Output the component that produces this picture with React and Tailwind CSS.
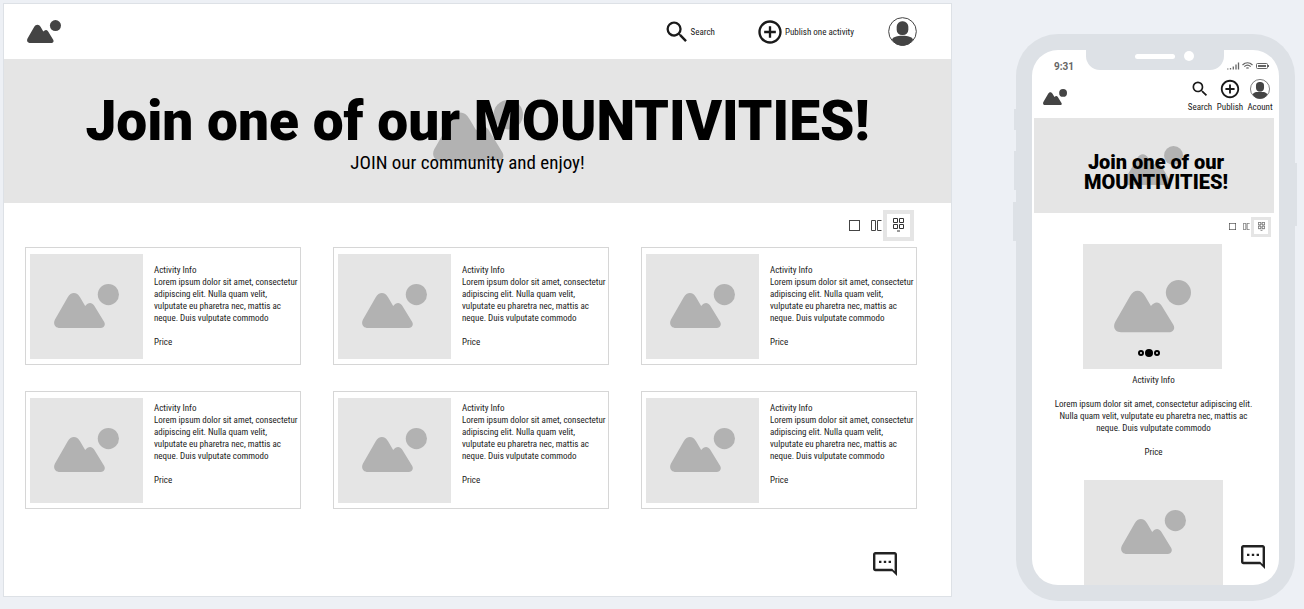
import React from "react";
import { MdSearch, MdOutlineAddCircleOutline } from "react-icons/md";

const WIDE_LINES = [
  "Lorem ipsum dolor sit amet, consectetur",
  "adipiscing elit. Nulla quam velit,",
  "vulputate eu pharetra nec, mattis ac",
  "neque. Duis vulputate commodo",
];

const PHONE_LINES = [
  "Lorem ipsum dolor sit amet, consectetur adipiscing elit.",
  "Nulla quam velit, vulputate eu pharetra nec, mattis ac",
  "neque. Duis vulputate commodo",
];

const ACTIVITIES = [1, 2, 3, 4, 5, 6];

function Lines({ lines }) {
  return lines.map((line) => <span key={line} className="block whitespace-nowrap">{line} </span>);
}

function Mountain({ className }) {
  return (
    <svg viewBox="0 0 196 134" fill="currentColor" className={className} aria-hidden="true">
      <path d="M18 133C3 133-4 120 3 107L41 41C51 23 69 23 79 41L94 66C103 55 114 54 121 65L151 114C157 124 150 133 140 133Z" />
      <circle cx="164" cy="32" r="32" />
    </svg>
  );
}

function Avatar({ className }) {
  return (
    <svg viewBox="0 0 87 87" className={className} aria-hidden="true">
      <path d="M12 68C14 59 28 56 43.500 56S73 59 75 68C68 79 57 86 43.500 86S19 79 12 68Z" fill="#444" />
      <rect x="26" y="13" width="35" height="41" rx="16" fill="#444" />
      <circle cx="43.500" cy="43.500" r="41.500" fill="none" stroke="#444" strokeWidth="3" />
    </svg>
  );
}

function ChatButton() {
  return (
    <button type="button" aria-label="Open chat" className="block text-[#222]">
      <svg viewBox="2 2 20 20" fill="currentColor" className="size-6" aria-hidden="true">
        <path d="M4 2h16c1.100 0 2 .9 2 2v18l-4-4H4c-1.100 0-2-.9-2-2V4c0-1.100.9-2 2-2zm0 14h14l2 2V4H4v12zM7 9.200h2v2H7zm4 0h2v2h-2zm4 0h2v2h-2z" />
      </svg>
    </button>
  );
}

function OneIcon({ className }) {
  return (
    <svg viewBox="0 0 11 11" fill="none" stroke="#444" className={className} aria-hidden="true">
      <rect x=".5" y=".5" width="10" height="10" />
    </svg>
  );
}

function TwoIcon({ className }) {
  return (
    <svg viewBox="0 0 11 11" fill="none" stroke="#444" className={className} aria-hidden="true">
      <path d="M.5.5h4v10h-4zM10.500.5h-4v10h4" />
    </svg>
  );
}

function FourIcon({ className }) {
  return (
    <svg viewBox="0 0 11 14" fill="none" stroke="#333" className={className} aria-hidden="true">
      <path d="M.5.5h4v4h-4zM6.500.5h4v4h-4zM.5 6.500h4v4h-4zM6.500 6.500h4v4h-4zM4 13h3" />
    </svg>
  );
}

function ActivityCard({ bodyClass }) {
  return (
    <article className="flex h-[118px] gap-[11px] border border-[#d6d6d6] pl-1">
      <div className="mt-[6px] flex h-[105px] w-[113px] shrink-0 items-center justify-center bg-[#e5e5e5]">
        <Mountain className="w-[65px] text-[#b2b2b2]" />
      </div>
      <div className={bodyClass}>
        <h2>Activity Info</h2>
        <p><Lines lines={WIDE_LINES} /></p>
        <p className="mt-3">Price</p>
      </div>
    </article>
  );
}

function Desktop() {
  return (
    <section className="min-w-0 flex-1 border border-[#dde1e6] bg-white text-[9px] leading-3">
      <header className="flex h-[55px] items-center pr-[34px] pl-[23px]">
        <a href="#home" aria-label="Home"><Mountain className="w-[34px] text-[#444]" /></a>
        <nav className="ml-auto flex items-center">
          <a href="#search" className="flex items-center"><MdSearch className="size-7" />Search</a>
          <a href="#publish" className="ml-[41px] flex items-center"><MdOutlineAddCircleOutline className="size-7" /><span className="ml-px">Publish one activity</span></a>
          <a href="#account" aria-label="Account" className="ml-[34px]"><Avatar className="size-[29px]" /></a>
        </nav>
      </header>
      <div className="relative isolate flex h-36 flex-col items-center bg-[#e5e5e5] pt-[30px] text-black">
        <Mountain className="absolute inset-0 -z-10 m-auto w-[90px] text-[#b2b2b2]" />
        <h1 className="font-[Roboto] text-[55px] leading-[64px] font-black whitespace-nowrap">Join one of our MOUNTIVITIES!</h1>
        <p className="pr-5 text-[19px] leading-5">JOIN our community and enjoy!</p>
      </div>
      <div className="flex h-11 items-center justify-end pr-[37px]">
        <button type="button" aria-label="One column"><OneIcon className="size-[11px]" /></button>
        <button type="button" aria-label="Two columns" className="ml-[11px]"><TwoIcon className="size-[11px]" /></button>
        <button type="button" aria-label="Grid" aria-pressed="true" className="ml-px flex size-[31px] items-center justify-center border-4 border-[#e5e5e5]"><FourIcon className="w-[11px]" /></button>
      </div>
      <div className="grid grid-cols-3 gap-x-8 gap-y-[26px] pr-[34px] pl-[21px]">
        {ACTIVITIES.map((id) => <ActivityCard key={id} bodyClass={id > 3 ? "pt-[10px]" : "pt-4"} />)}
      </div>
      <div className="flex justify-end pt-[43px] pr-[54px] pb-5"><ChatButton /></div>
    </section>
  );
}

function StatusBar() {
  return (
    <div className="flex h-8 items-start pr-[10px] pl-[22px]">
      <span className="w-8 pt-[11px] font-[Roboto] text-[10px] leading-3 font-bold text-[#666]">9:31</span>
      <div className="flex h-5 w-[138px] items-start rounded-b-[14px] bg-[#dde1e6] pl-[49px]">
        <span className="mt-1 h-[5px] w-10 rounded-full bg-white" />
        <span className="mt-px ml-[9px] size-[10px] rounded-full bg-white" />
      </div>
      <svg viewBox="0 0 42 8" className="mt-3 ml-auto h-2 w-[42px]" fill="none" stroke="#666" aria-hidden="true">
        <path d="M.8 7.500v-1M3.500 7.500V6M6.300 7.500V4.500M9 7.500V2.500M11.500 7.500V.5" strokeWidth="1.300" />
        <path d="M15.500 3c3-3 7-3 10 0M17.300 4.700c2-2 4.400-2 6.400 0M19.300 6.300c.8-.7 1.600-.7 2.400 0" strokeWidth="1.200" />
        <rect x="29.500" y="1.500" width="11" height="5" rx="1" />
        <path d="M31 4h8M41.500 3v2" strokeWidth="2" />
      </svg>
    </div>
  );
}

function Phone() {
  return (
    <section className="relative mt-[31px] w-[279px] shrink-0 rounded-[42px] bg-[#dde1e6] p-4 text-[9px] leading-3">
      <span className="absolute top-[75px] -left-[2px] h-[21px] w-1 bg-[#dde1e6]" />
      <span className="absolute top-[117px] -left-[2px] h-[39px] w-1 bg-[#dde1e6]" />
      <span className="absolute top-[168px] -left-[3px] h-[39px] w-1 bg-[#dde1e6]" />
      <span className="absolute top-[129px] -right-[2px] h-[63px] w-1 bg-[#dde1e6]" />
      <div className="overflow-hidden rounded-[26px] bg-white">
        <StatusBar />
        <header className="flex h-9 items-start justify-between pr-[6px] pl-[11px]">
          <a href="#home" aria-label="Home" className="pt-[7px]"><Mountain className="w-6 text-[#444]" /></a>
          <nav className="-mt-1 grid grid-cols-3 gap-1">
            <a href="#search" className="flex w-[26px] flex-col items-center gap-px"><span className="flex h-[22px] items-center"><MdSearch className="size-5" /></span>Search</a>
            <a href="#publish" className="flex w-[26px] flex-col items-center gap-px"><MdOutlineAddCircleOutline className="size-[22px]" />Publish</a>
            <a href="#account" className="flex w-[26px] flex-col items-center gap-px"><span className="flex h-[22px] items-center"><Avatar className="size-5" /></span>Acount</a>
          </nav>
        </header>
        <div className="relative isolate mr-[5px] ml-[2px] flex h-[95px] items-center justify-center bg-[#e5e5e5] pt-3 pl-1 text-black">
          <Mountain className="absolute inset-0 -z-10 m-auto w-[58px] text-[#b2b2b2]" />
          <h1 className="text-center font-[Roboto] text-[20px] leading-5 font-black whitespace-nowrap">Join one of our<br />MOUNTIVITIES!</h1>
        </div>
        <div className="flex h-[31px] items-center justify-end pr-2 pb-1">
          <button type="button" aria-label="One column"><OneIcon className="size-[7px]" /></button>
          <button type="button" aria-label="Two columns" className="ml-[7px]"><TwoIcon className="size-[7px]" /></button>
          <button type="button" aria-label="Grid" aria-pressed="true" className="ml-px flex size-5 items-center justify-center border-3 border-[#e5e5e5]"><FourIcon className="w-[7px]" /></button>
        </div>
        <article className="flex flex-col items-center pr-1 text-center">
          <div className="relative mr-[3px] flex h-[125px] w-[139px] items-center justify-center bg-[#e5e5e5]">
            <Mountain className="w-[77px] text-[#b2b2b2]" />
            <span className="absolute inset-x-0 bottom-3 flex items-center justify-center gap-px pr-[6px]">
              <span className="size-[6px] rounded-full border-2 border-black" />
              <span className="size-2 rounded-full bg-black" />
              <span className="size-[6px] rounded-full border-2 border-black" />
            </span>
          </div>
          <h2 className="mt-[5px]">Activity Info</h2>
          <p className="mt-3"><Lines lines={PHONE_LINES} /></p>
          <p className="mt-3">Price</p>
        </article>
        <div className="relative mt-[22px] flex justify-center">
          <div className="mr-1 flex h-[105px] w-[139px] items-center justify-center bg-[#e5e5e5]">
            <Mountain className="w-[65px] text-[#b2b2b2]" />
          </div>
          <div className="absolute right-[14px] bottom-4"><ChatButton /></div>
        </div>
      </div>
    </section>
  );
}

export default function App() {
  return (
    <main className="flex min-h-screen items-start gap-16 bg-[#edf0f5] py-[3px] pr-[9px] pl-[3px] font-['Roboto_Condensed',Roboto,sans-serif] text-[#1a1a1a]">
      <Desktop />
      <Phone />
    </main>
  );
}
